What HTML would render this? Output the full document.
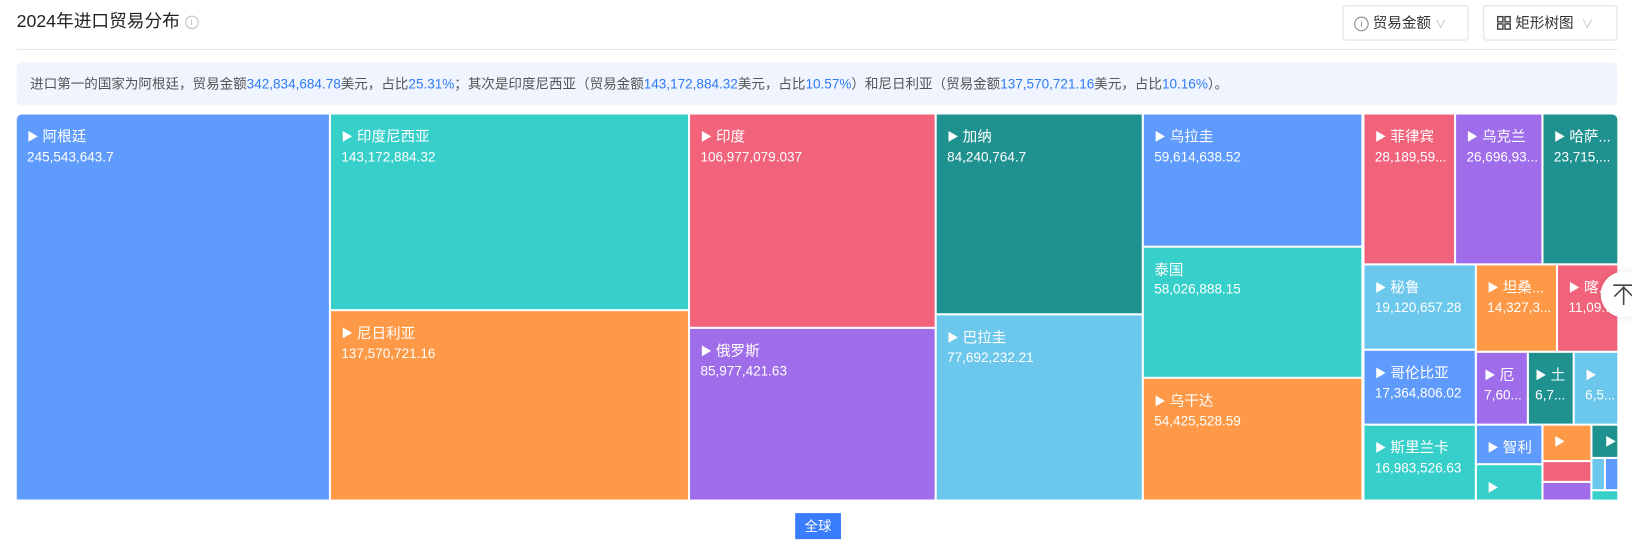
<!DOCTYPE html>
<html><head><meta charset="utf-8"><style>
html,body{margin:0;padding:0;width:1632px;height:553px;overflow:hidden;background:#fff;}
#w{position:absolute;left:0;top:0;width:1568px;height:531px;transform:scale(1.0408);transform-origin:0 0;font-family:"Liberation Sans","Noto Sans CJK SC",sans-serif;}
.a{position:absolute;}
.t{position:absolute;overflow:hidden;color:#fff;box-sizing:border-box;padding:12px 0 0 10px;white-space:nowrap;}
.t b{display:block;font-weight:normal;font-size:14px;line-height:18px;}
.t b s{text-decoration:none;font-size:11px;vertical-align:1px;}
.t i{display:block;font-style:normal;font-size:13px;line-height:20px;}
.B{background:#5e9bfd}.T{background:#37cfc9}.R{background:#f1637b}.D{background:#1f9290}.L{background:#6cc7ec}.O{background:#fe9947}.P{background:#a06dea}
.btn{position:absolute;border:1px solid #dcdfe6;border-radius:3px;box-sizing:border-box;font-size:14px;color:#333;line-height:32px;}
</style></head><body><div id="w">
<div class="a" style="left:16px;top:8px;font-size:17px;color:#222;line-height:26px;">2024年进口贸易分布 <span style="display:inline-block;width:11px;height:11px;border:1px solid #bbb;border-radius:50%;font-size:9px;line-height:11px;text-align:center;color:#bbb;vertical-align:2px;">i</span></div>
<div class="btn" style="left:1290px;top:5px;width:121px;height:34px;padding-left:10px;"><span style="display:inline-block;width:12px;height:12px;border:1px solid #888;border-radius:50%;font-size:9px;line-height:12px;text-align:center;color:#888;vertical-align:1px;">i</span> 贸易金额 <span style="color:#bbb;font-size:11px;">∨</span></div>
<div class="btn" style="left:1425px;top:5px;width:129px;height:34px;padding-left:12px;"><span style="display:inline-block;vertical-align:-2px;"><svg width="14" height="14" viewBox="0 0 14 14" fill="none" stroke="#444" stroke-width="1.4"><rect x="1" y="1" width="5" height="5"/><rect x="8" y="1" width="5" height="5"/><rect x="1" y="8" width="5" height="5"/><rect x="8" y="8" width="5" height="5"/></svg></span> 矩形树图 &nbsp;<span style="color:#bbb;font-size:11px;">∨</span></div>
<div class="a" style="left:16px;top:47px;width:1538px;height:1px;background:#e6e6e6;"></div>
<div class="a" style="left:16px;top:60px;width:1538px;height:41px;background:#eff4fe;border-radius:5px;font-size:13px;line-height:41px;color:#555;padding-left:13px;box-sizing:border-box;white-space:nowrap;">进口第一的国家为阿根廷，贸易金额<span style="color:#2f7bf6">342,834,684.78</span>美元，占比<span style="color:#2f7bf6">25.31%</span>；其次是印度尼西亚（贸易金额<span style="color:#2f7bf6">143,172,884.32</span>美元，占比<span style="color:#2f7bf6">10.57%</span>）和尼日利亚（贸易金额<span style="color:#2f7bf6">137,570,721.16</span>美元，占比<span style="color:#2f7bf6">10.16%</span>）。</div>
<div class="a" style="left:16px;top:110px;width:1538px;height:370px;overflow:hidden;border-radius:5px 5px 0 0;">
<div style="position:absolute;left:-16px;top:-110px;">
<div class="t B" style="left:16px;top:110px;width:300px;height:370px;"><b><s>▶</s> 阿根廷</b><i>245,543,643.7</i></div>
<div class="t T" style="left:318px;top:110px;width:343px;height:187px;"><b><s>▶</s> 印度尼西亚</b><i>143,172,884.32</i></div>
<div class="t O" style="left:318px;top:299px;width:343px;height:181px;"><b><s>▶</s> 尼日利亚</b><i>137,570,721.16</i></div>
<div class="t R" style="left:663px;top:110px;width:235px;height:204px;"><b><s>▶</s> 印度</b><i>106,977,079.037</i></div>
<div class="t P" style="left:663px;top:316px;width:235px;height:164px;"><b><s>▶</s> 俄罗斯</b><i>85,977,421.63</i></div>
<div class="t D" style="left:900px;top:110px;width:197px;height:191px;"><b><s>▶</s> 加纳</b><i>84,240,764.7</i></div>
<div class="t L" style="left:900px;top:303px;width:197px;height:177px;"><b><s>▶</s> 巴拉圭</b><i>77,692,232.21</i></div>
<div class="t B" style="left:1099px;top:110px;width:209px;height:126px;"><b><s>▶</s> 乌拉圭</b><i>59,614,638.52</i></div>
<div class="t T" style="left:1099px;top:238px;width:209px;height:124px;"><b>泰国</b><i>58,026,888.15</i></div>
<div class="t O" style="left:1099px;top:364px;width:209px;height:116px;"><b><s>▶</s> 乌干达</b><i>54,425,528.59</i></div>
<div class="t R" style="left:1311px;top:110px;width:86px;height:143px;"><b><s>▶</s> 菲律宾</b><i>28,189,59...</i></div>
<div class="t P" style="left:1399px;top:110px;width:82px;height:143px;"><b><s>▶</s> 乌克兰</b><i>26,696,93...</i></div>
<div class="t D" style="left:1483px;top:110px;width:71px;height:143px;"><b><s>▶</s> 哈萨...</b><i>23,715,...</i></div>
<div class="t L" style="left:1311px;top:255px;width:106px;height:80px;"><b><s>▶</s> 秘鲁</b><i>19,120,657.28</i></div>
<div class="t O" style="left:1419px;top:255px;width:76px;height:82px;"><b><s>▶</s> 坦桑...</b><i>14,327,3...</i></div>
<div class="t R" style="left:1497px;top:255px;width:57px;height:82px;"><b><s>▶</s> 喀...</b><i>11,09...</i></div>
<div class="t B" style="left:1311px;top:337px;width:106px;height:70px;"><b><s>▶</s> 哥伦比亚</b><i>17,364,806.02</i></div>
<div class="t P" style="left:1419px;top:339px;width:48px;height:68px;padding-left:7px;"><b><s>▶</s> 厄</b><i>7,60...</i></div>
<div class="t D" style="left:1469px;top:339px;width:42px;height:68px;padding-left:6px;"><b><s>▶</s> 土</b><i>6,7...</i></div>
<div class="t L" style="left:1513px;top:339px;width:41px;height:68px;padding-left:10px;"><b><s>▶</s></b><i>6,5...</i></div>
<div class="t T" style="left:1311px;top:409px;width:106px;height:71px;"><b><s>▶</s> 斯里兰卡</b><i>16,983,526.63</i></div>
<div class="t B" style="left:1419px;top:409px;width:62px;height:36px;"><b><s>▶</s> 智利</b></div>
<div class="t T" style="left:1419px;top:447px;width:62px;height:33px;"><b><s>▶</s></b></div>
<div class="t O" style="left:1483px;top:409px;width:45px;height:33px;padding-top:6px;"><b><s>▶</s></b></div>
<div class="t R" style="left:1483px;top:444px;width:45px;height:18px;"></div>
<div class="t P" style="left:1483px;top:464px;width:45px;height:16px;"></div>
<div class="t D" style="left:1530px;top:409px;width:24px;height:30px;padding-top:6px;padding-left:12px;"><b><s>▶</s></b></div>
<div class="t L" style="left:1530px;top:441px;width:11px;height:29px;"></div>
<div class="t B" style="left:1543px;top:441px;width:11px;height:29px;"></div>
<div class="t T" style="left:1530px;top:472px;width:24px;height:8px;"></div>
</div></div>
<div class="a" style="left:1538px;top:261px;width:44px;height:44px;border-radius:50%;background:#fff;box-shadow:0 0 6px rgba(0,0,0,0.12);"><svg width="44" height="44" viewBox="0 0 44 44" fill="none" stroke="#444" stroke-width="1.5"><line x1="12" y1="13" x2="32" y2="13"/><line x1="22" y1="14" x2="22" y2="32"/><polyline points="13,24 22,15 31,24"/></svg></div>
<div class="a" style="left:764px;top:493px;width:44px;height:25px;background:#3a7cfe;color:#fff;font-size:13px;line-height:25px;text-align:center;">全球</div>
</div></body></html>
